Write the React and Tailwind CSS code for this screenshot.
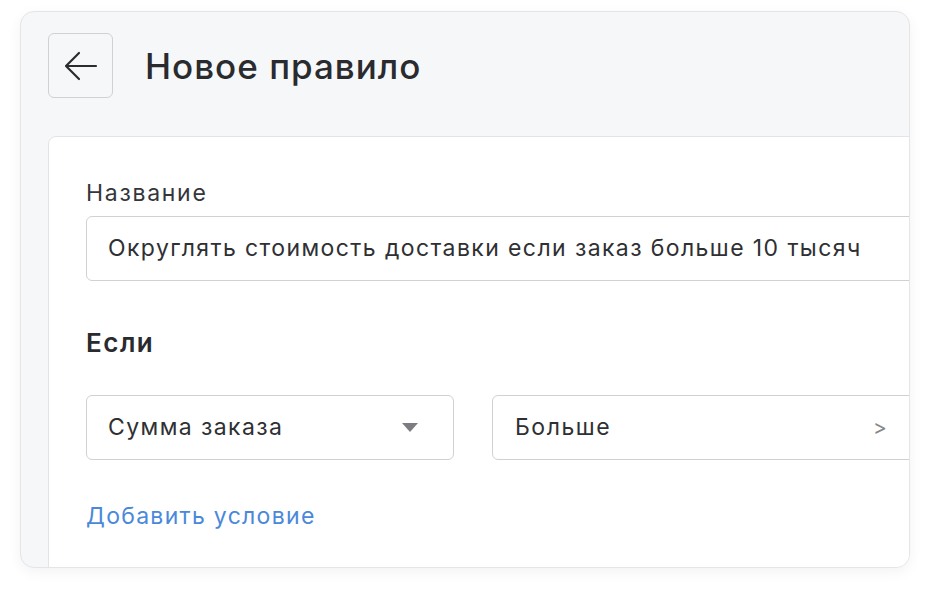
import React from 'react';

const font = { fontFamily: 'Inter, "Noto Sans", sans-serif' };

const BackButton = () => (
  <button className="flex h-[65px] w-[65px] shrink-0 items-center justify-center rounded-[6px] border border-[#cfd1d5] bg-[#f6f7f9]">
    <svg width="34" height="30" viewBox="0 0 34 30" fill="none" stroke="#2b2c2f" strokeWidth="2.2" strokeLinecap="round" strokeLinejoin="round">
      <path d="M32 15H3" />
      <path d="M15 2L2 15l13 13" />
    </svg>
  </button>
);

const App = () => {
  return (
    <div className="h-[597px] w-[930px] bg-white pl-[20px] pt-[11px]" style={font}>
      <div className="h-[557px] w-[890px] overflow-hidden rounded-[14px] border border-[#e4e5e9] bg-[#f6f7f9] pl-[27px] pt-[21px] shadow-[0_4px_14px_rgba(0,0,0,0.05)]">
        <div className="flex items-center gap-[32px]">
          <BackButton />
          <h1 className="text-[35px] font-medium leading-[40px] tracking-[1px] text-[#2a2b2e]">Новое правило</h1>
        </div>

        <div className="mt-[38px] w-[900px] rounded-[8px] border border-[#e3e4e8] bg-white pb-[60px] pl-[37px] pt-[42px]">
          <div className="mb-[9px] text-[23px] leading-[28px] tracking-[1.7px] text-[#35363a]">Название</div>
          <div className="flex h-[65px] w-[880px] items-center rounded-[6px] border border-[#cfd1d5] pl-[21px] text-[23px] tracking-[1.4px] text-[#2f3033]">
            Округлять стоимость доставки если заказ больше 10 тысяч
          </div>

          <div className="mt-[46px] text-[26px] font-semibold leading-[32px] tracking-[1.5px] text-[#2a2b2e]">Если</div>

          <div className="mt-[36px] flex gap-[38px]">
            <div className="flex h-[65px] w-[368px] items-center justify-between rounded-[6px] border border-[#cfd1d5] pl-[21px] pr-[35px] text-[23px] tracking-[1.4px] text-[#2f3033]">
              <span>Сумма заказа</span>
              <svg width="16" height="9" viewBox="0 0 16 9">
                <path d="M0 0h16L8 9z" fill="#7c7d80" />
              </svg>
            </div>
            <div className="flex h-[65px] w-[431px] items-center justify-between rounded-[6px] border border-[#cfd1d5] pl-[22px] pr-[35px] text-[23px] tracking-[1.5px] text-[#2f3033]">
              <span>Больше</span>
              <span className="text-[21px] tracking-normal text-[#86878a]">&gt;</span>
            </div>
          </div>

          <button className="mt-[42px] text-[23px] leading-[28px] tracking-[1.3px] text-[#4a88da]">Добавить условие</button>
        </div>
      </div>
    </div>
  );
};

export default App;
